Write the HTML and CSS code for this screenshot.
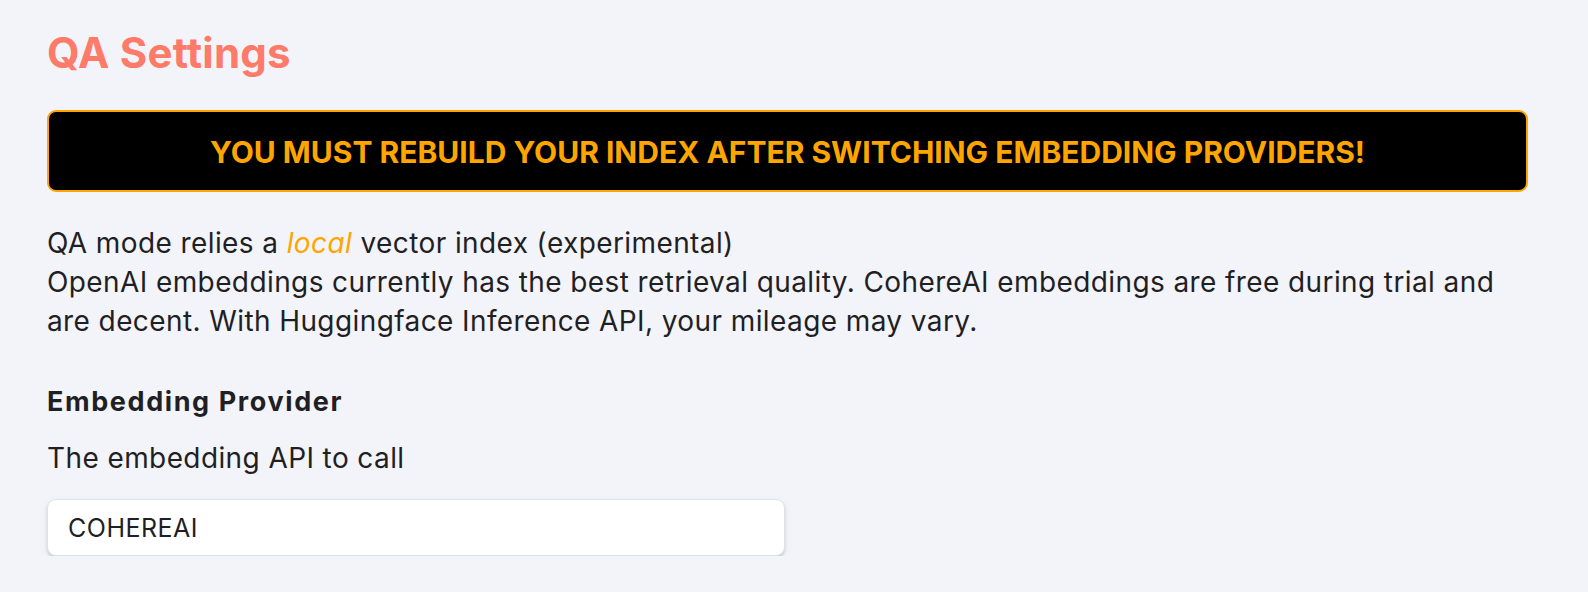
FILE: index.html
```html
<!DOCTYPE html>
<html lang="en">
<head>
<meta charset="utf-8">
<title>QA Settings</title>
<link rel="stylesheet" href="styles.css">
</head>
<body>
<main class="page">
  <h1 class="title">QA Settings</h1>
  <div class="banner">YOU MUST REBUILD YOUR INDEX AFTER SWITCHING EMBEDDING PROVIDERS!</div>
  <p class="intro">QA mode relies a <em class="accent">local</em> vector index (experimental)<br>OpenAI embeddings currently has the best retrieval quality. CohereAI embeddings are free during trial and are decent. With Huggingface Inference API, your mileage may vary.</p>
  <section class="setting">
    <h2 class="setting-name">Embedding Provider</h2>
    <p class="setting-desc">The embedding API to call</p>
    <div class="select">COHEREAI</div>
  </section>
</main>
</body>
</html>
```
FILE: styles.css
```css
html, body {
  margin: 0;
  padding: 0;
  background: #f3f4f9;
}
body {
  font-family: Inter, "Noto Sans", sans-serif;
  color: #1f1f24;
}
.page {
  display: flex;
  flex-direction: column;
  align-items: stretch;
  padding: 29px 60px 0 47px;
}
.title {
  margin: 0;
  font-size: 42px;
  line-height: 48px;
  font-weight: 700;
  letter-spacing: 0.2px;
  color: #fe7a69;
}
.banner {
  margin-top: 33px;
  background: #000;
  border: 2px solid #ffa500;
  border-radius: 9px;
  padding: 20px 20px 18px;
  text-align: center;
  font-size: 30px;
  line-height: 40px;
  font-weight: 700;
  color: #ffa500;
}
.intro {
  margin: 32px 0 0;
  font-size: 28px;
  line-height: 39px;
  letter-spacing: 0.4px;
}
.accent {
  color: #ffa500;
  font-style: italic;
}
.setting {
  display: flex;
  flex-direction: column;
  align-items: flex-start;
  margin-top: 44px;
}
.setting-name {
  margin: 0;
  font-size: 27px;
  line-height: 34px;
  font-weight: 700;
  letter-spacing: 1.6px;
}
.setting-desc {
  margin: 20px 0 0;
  font-size: 28px;
  line-height: 39px;
  letter-spacing: 0.4px;
}
.select {
  margin-top: 21px;
  box-sizing: border-box;
  width: 738px;
  height: 57px;
  padding: 0 20px;
  display: flex;
  align-items: center;
  background: #fff;
  border: 1px solid #e2e2e6;
  border-radius: 9px;
  box-shadow: 0 2px 3px rgba(0, 0, 0, 0.14), 0 3px 10px rgba(0, 0, 0, 0.05);
  font-size: 25px;
  letter-spacing: 0.5px;
  color: #1f1f24;
}
```
